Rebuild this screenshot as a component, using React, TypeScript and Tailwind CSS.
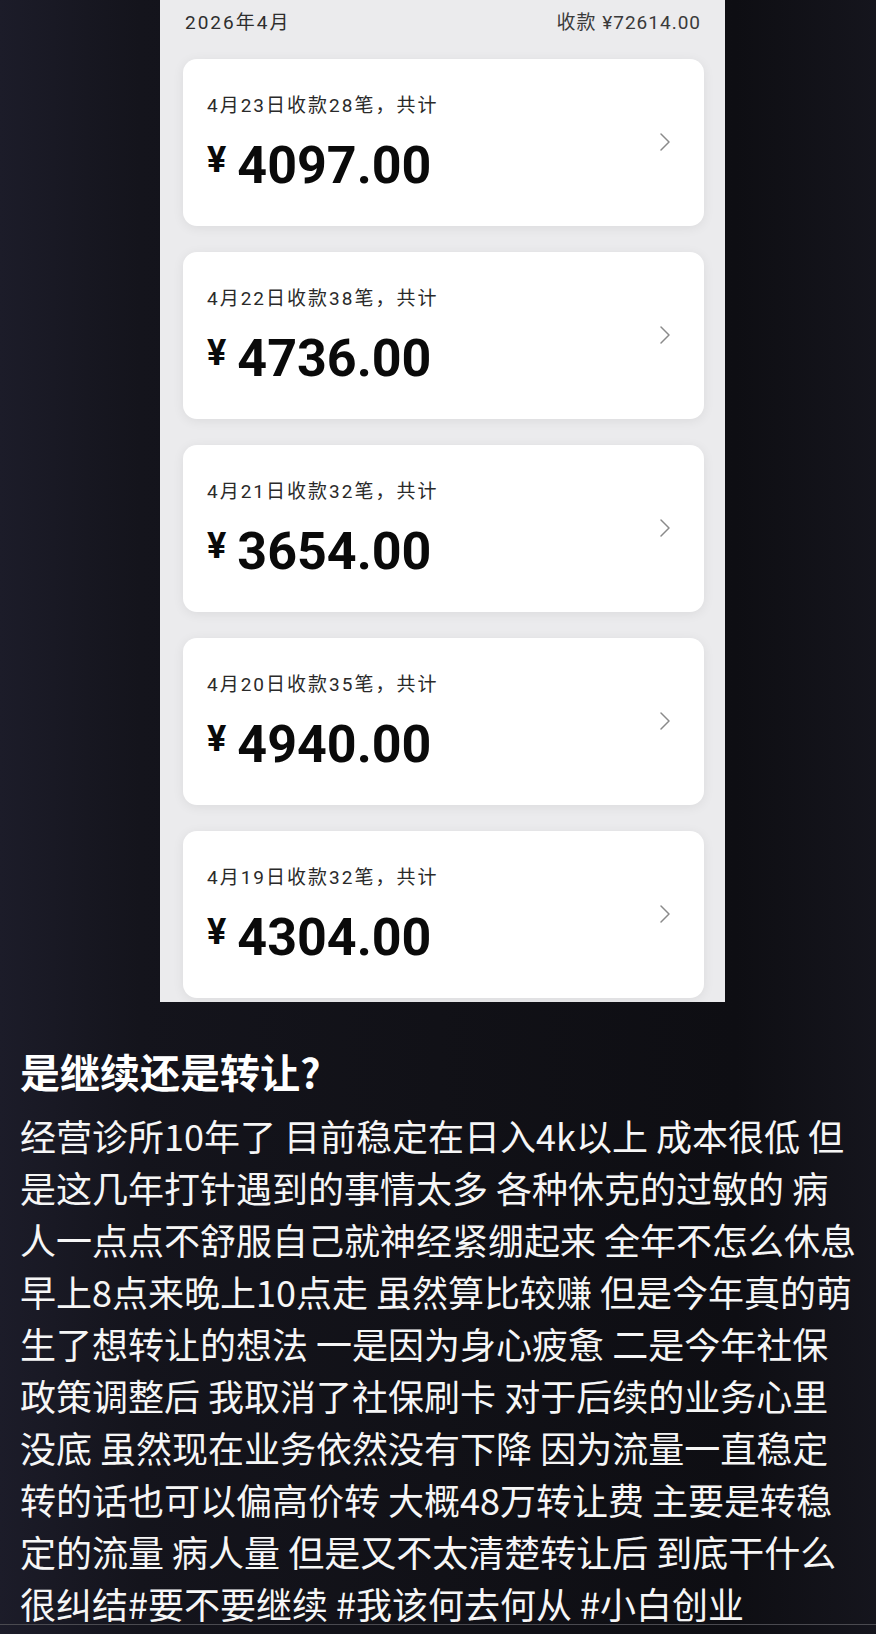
import React from 'react';

const days = [
  { label: '4月23日收款28笔，共计', amount: '4097.00' },
  { label: '4月22日收款38笔，共计', amount: '4736.00' },
  { label: '4月21日收款32笔，共计', amount: '3654.00' },
  { label: '4月20日收款35笔，共计', amount: '4940.00' },
  { label: '4月19日收款32笔，共计', amount: '4304.00' },
];

const lines = [
  '经营诊所10年了 目前稳定在日入4k以上 成本很低 但',
  '是这几年打针遇到的事情太多 各种休克的过敏的 病',
  '人一点点不舒服自己就神经紧绷起来 全年不怎么休息',
  '早上8点来晚上10点走 虽然算比较赚 但是今年真的萌',
  '生了想转让的想法 一是因为身心疲惫 二是今年社保',
  '政策调整后 我取消了社保刷卡 对于后续的业务心里',
  '没底 虽然现在业务依然没有下降 因为流量一直稳定',
  '转的话也可以偏高价转 大概48万转让费 主要是转稳',
  '定的流量 病人量 但是又不太清楚转让后 到底干什么',
  '很纠结#要不要继续 #我该何去何从 #小白创业',
];

const uiFont = { fontFamily: 'Roboto, "Noto Sans CJK SC", sans-serif' };
const cjkFont = { fontFamily: '"Noto Sans CJK SC", "Noto Sans", sans-serif' };

function DayCard({ label, amount }: { label: string; amount: string }) {
  return (
    <div className="h-[167px] shrink-0 rounded-[14px] bg-white shadow-[0_2px_12px_rgba(0,0,0,0.07)] flex items-center justify-between">
      <div className="pl-[24px] flex flex-col">
        <div className="text-[19px] leading-[24px] tracking-[2px] text-[#2a2a2a]" style={uiFont}>
          {label}
        </div>
        <div className="mt-[22px] flex items-start text-[#0a0a0a]" style={{ fontFamily: 'Roboto, sans-serif' }}>
          <span className="text-[36px] leading-none font-bold mt-[2px]">¥</span>
          <span className="text-[52px] leading-none font-bold ml-[11px]">{amount}</span>
        </div>
      </div>
      <svg width="12" height="20" viewBox="0 0 12 20" className="mr-[33px] mb-[1px]">
        <polyline points="2,2 10,10 2,18" fill="none" stroke="#8a8a8a" strokeWidth="1.5" strokeLinecap="round" strokeLinejoin="round" />
      </svg>
    </div>
  );
}

export default function App() {
  return (
    <div className="w-[876px] min-h-[1634px] overflow-hidden bg-[linear-gradient(90deg,#1c1c29_0%,#14141c_16%,#111117_50%,#0e0e13_84%,#15151d_100%)]">
      {/* screenshot of the payment list */}
      <div className="flex">
        <div className="ml-[160px] w-[565px] h-[1002px] bg-[#ebebed] overflow-hidden flex flex-col">
          <div className="pt-[10px] pl-[25px] pr-[24px] flex justify-between text-[19px] leading-[26px]" style={uiFont}>
            <span className="tracking-[2px] text-[#2e2e2e]">2026年4月</span>
            <span className="tracking-[1px] text-[#3a3a3a]">收款 ¥72614.00</span>
          </div>
          <div className="mt-[23px] pl-[23px] pr-[21px] flex flex-col gap-[26px]">
            {days.map((d) => (
              <DayCard key={d.label} label={d.label} amount={d.amount} />
            ))}
          </div>
        </div>
      </div>

      {/* post text */}
      <div className="pt-[45px] pl-[20px] text-white" style={cjkFont}>
        <div className="text-[40px] leading-[48px] font-bold">是继续还是转让?</div>
        <div className="mt-[14px] text-[36px] leading-[52px] font-normal text-[#f6f6f6]">
          {lines.map((l, i) => (
            <div key={i} className="whitespace-nowrap">{l}</div>
          ))}
        </div>
      </div>
      <div className="mt-[-5px] h-px bg-[#4a4a50]" />
    </div>
  );
}
